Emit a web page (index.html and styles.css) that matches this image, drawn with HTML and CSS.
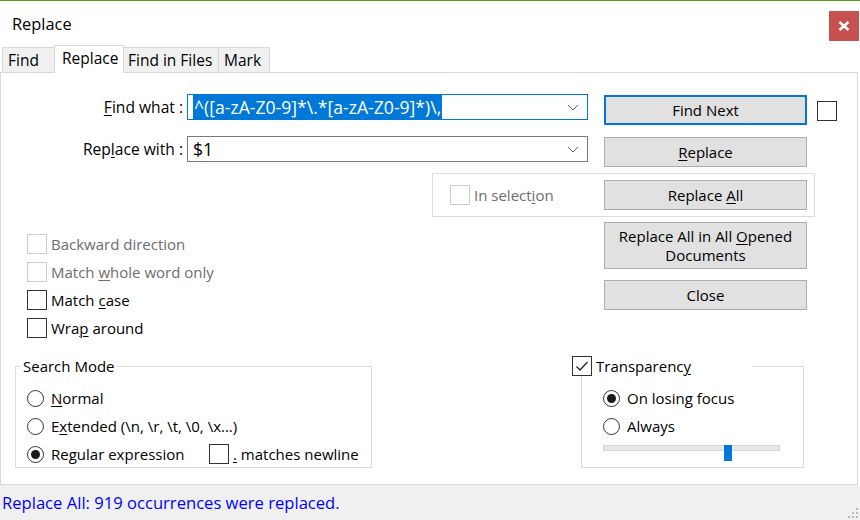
FILE: index.html
```html
<!DOCTYPE html>
<html lang="en">
<head>
  <meta charset="UTF-8">
  <title>Replace</title>
  <link rel="stylesheet" href="styles.css">
</head>
<body>
<div class="window">

  <header class="titlebar">
    <span class="title">Replace</span>
    <button class="close" title="Close">
      <svg width="12" height="10" viewBox="0 0 12 10"><path d="M1.5 1l9 8M10.5 1l-9 8" stroke="#fff" stroke-width="2.4" fill="none"/></svg>
    </button>
  </header>

  <nav class="tabs">
    <span class="tab tab-find">Find</span>
    <span class="tab tab-replace active">Replace</span>
    <span class="tab tab-files">Find in Files</span>
    <span class="tab tab-mark">Mark</span>
  </nav>

  <section class="panel">

    <div class="field-row">
      <label class="field-label"><u>F</u>ind what :</label>
      <div class="combo focused">
        <span class="combo-text"><span class="selected">^([a-zA-Z0-9]*\.*[a-zA-Z0-9]*)\,</span></span>
        <svg class="chevron" width="12" height="7" viewBox="0 0 12 7"><path d="M1 1l5 5 5-5" stroke="#606060" fill="none"/></svg>
      </div>
      <button class="btn default">Find Next</button>
      <span class="checkbox side-check"></span>
    </div>

    <div class="field-row">
      <label class="field-label">Rep<u>l</u>ace with :</label>
      <div class="combo">
        <span class="combo-text">$1</span>
        <svg class="chevron" width="12" height="7" viewBox="0 0 12 7"><path d="M1 1l5 5 5-5" stroke="#606060" fill="none"/></svg>
      </div>
      <button class="btn"><u>R</u>eplace</button>
    </div>

    <div class="selection-box">
      <span class="checkbox disabled"></span>
      <span class="disabled-text">In select<u>i</u>on</span>
      <button class="btn">Replace <u>A</u>ll</button>
    </div>

    <div class="middle">
      <div class="options">
        <div class="option"><span class="checkbox disabled"></span><span class="disabled-text">Backward direction</span></div>
        <div class="option"><span class="checkbox disabled"></span><span class="disabled-text">Match <u>w</u>hole word only</span></div>
        <div class="option"><span class="checkbox"></span><span>Match <u>c</u>ase</span></div>
        <div class="option"><span class="checkbox"></span><span>Wra<u>p</u> around</span></div>
      </div>
      <div class="actions">
        <button class="btn tall">Replace All in All <u>O</u>pened<br>Documents</button>
        <button class="btn">Close</button>
      </div>
    </div>

    <div class="groups">
      <fieldset class="group search-mode">
        <legend>Search Mode</legend>
        <div class="group-body">
          <div class="option"><span class="radio"></span><span><u>N</u>ormal</span></div>
          <div class="option"><span class="radio"></span><span>E<u>x</u>tended (\n, \r, \t, \0, \x...)</span></div>
          <div class="option">
            <span class="radio checked"></span><span class="regex-label">Re<u>g</u>ular expression</span>
            <span class="checkbox"></span><span><u>.</u> matches newline</span>
          </div>
        </div>
      </fieldset>

      <fieldset class="group transparency">
        <legend>
          <span class="checkbox">
            <svg width="18" height="18" viewBox="0 0 18 18"><path d="M3.5 9.5l3.5 3.5 7.5-8" stroke="#222" stroke-width="1.3" fill="none"/></svg>
          </span>
          <span>Transparenc<u>y</u></span>
        </legend>
        <div class="group-body">
          <div class="option"><span class="radio checked"></span><span>On losing focus</span></div>
          <div class="option"><span class="radio"></span><span>Always</span></div>
          <div class="slider">
            <div class="track"></div>
            <div class="thumb"></div>
          </div>
        </div>
      </fieldset>
    </div>

  </section>

  <footer class="status">
    <span>Replace All: 919 occurrences were replaced.</span>
    <svg class="grip" width="10" height="10" viewBox="0 0 10 10">
      <rect x="8" y="0" width="2" height="2" fill="#b8b8b8"/>
      <rect x="4" y="4" width="2" height="2" fill="#b8b8b8"/>
      <rect x="8" y="4" width="2" height="2" fill="#b8b8b8"/>
      <rect x="0" y="8" width="2" height="2" fill="#b8b8b8"/>
      <rect x="4" y="8" width="2" height="2" fill="#b8b8b8"/>
      <rect x="8" y="8" width="2" height="2" fill="#b8b8b8"/>
    </svg>
  </footer>

</div>
</body>
</html>
```

FILE: styles.css
```css
* {
  box-sizing: border-box;
}

body {
  margin: 0;
  width: 860px;
  height: 520px;
  overflow: hidden;
  background: #fff;
  font-family: "Open Sans", "Noto Sans", sans-serif;
  font-size: 15px;
  line-height: 20px;
  color: #000;
}

u {
  text-decoration-thickness: 1px;
  text-underline-offset: 2px;
}

.window {
  display: flex;
  flex-direction: column;
  height: 520px;
}

/* title bar */

.titlebar {
  height: 45px;
  border-top: 1px solid #5b9a1c;
  display: flex;
  justify-content: space-between;
  align-items: flex-start;
}

.title {
  font-size: 16.4px;
  margin: 13px 0 0 12px;
}

.close {
  width: 30px;
  height: 30px;
  margin: 10px 1px 0 0;
  padding: 0;
  border: 0;
  background: #c75050;
  display: flex;
  align-items: center;
  justify-content: center;
}

/* tabs */

.tabs {
  height: 27px;
  display: flex;
  align-items: flex-end;
  padding-left: 2px;
  position: relative;
  z-index: 1;
  font-size: 15.5px;
}

.tab {
  height: 25px;
  margin-left: -1px;
  border: 1px solid #d9d9d9;
  border-bottom: 0;
  background: #f0f0f0;
  line-height: 24px;
}

.tab-find { margin-left: 0; width: 53px; padding-left: 5px; }
.tab-replace { width: 70px; padding-left: 7px; }
.tab-files { width: 96px; padding-left: 4px; }
.tab-mark { width: 52px; padding-left: 5px; }

.tab.active {
  height: 28px;
  margin-bottom: -1px;
  background: #fff;
  line-height: 25px;
}

/* tab page */

.panel {
  width: 858px;
  height: 413px;
  border: 1px solid #d9d9d9;
  padding-top: 21px;
}

.field-row {
  display: flex;
  align-items: flex-start;
  height: 31px;
  margin-bottom: 11px;
}

.field-label {
  width: 182px;
  margin-right: 4px;
  text-align: right;
  line-height: 26px;
  font-size: 15.6px;
}

.combo {
  width: 401px;
  height: 26px;
  margin-right: 16px;
  border: 1px solid #7a7a7a;
  display: flex;
  align-items: center;
  padding-left: 5px;
  font-size: 17.6px;
}

.combo.focused {
  border-color: #0078d7;
}

.combo-text {
  flex: 1;
  white-space: nowrap;
}

.selected {
  background: #0078d7;
  color: #fff;
  padding: 0 1px;
}

.chevron {
  margin-right: 8px;
}

.btn {
  width: 203px;
  height: 30px;
  margin-top: 1px;
  padding: 0;
  border: 1px solid #adadad;
  background: #e1e1e1;
  font: inherit;
  color: #000;
}

.btn.default {
  border: 2px solid #0078d7;
}

.btn.tall {
  height: 47px;
  margin-top: 0;
  line-height: 19px;
}

.checkbox {
  width: 20px;
  height: 20px;
  flex: none;
  border: 1px solid #333;
  background: #fff;
  display: inline-flex;
  align-items: center;
  justify-content: center;
}

.checkbox.disabled {
  border-color: #cccccc;
}

.disabled-text {
  color: #6d6d6d;
}

.side-check {
  margin: 7px 0 0 10px;
}

/* in selection */

.selection-box {
  width: 383px;
  height: 44px;
  margin: -5px 0 0 431px;
  border: 1px solid #dcdcdc;
  display: flex;
  align-items: center;
  gap: 4px;
  padding: 0 7px 0 17px;
}

.selection-box .btn {
  margin: 0 0 0 auto;
}

/* options and side buttons */

.middle {
  display: flex;
  height: 125px;
}

.options {
  width: 603px;
  padding: 13px 0 0 26px;
}

.option {
  display: flex;
  align-items: center;
  gap: 4px;
  height: 28px;
}

.actions {
  display: flex;
  flex-direction: column;
  gap: 11px;
  padding-top: 5px;
}

.actions .btn {
  margin-top: 0;
}

/* group boxes */

.groups {
  display: flex;
  align-items: flex-start;
  margin-top: 14px;
}

.group {
  height: 112px;
  margin: 0;
  padding: 0;
  border: 1px solid #dcdcdc;
  min-width: 0;
}

.group legend {
  padding: 0 2px;
  line-height: 20px;
}

.group-body {
  padding-top: 8px;
}

.search-mode {
  width: 357px;
  margin-left: 14px;
}

.search-mode legend {
  margin-left: 5px;
}

.search-mode .group-body {
  padding-left: 11px;
}

.transparency {
  width: 223px;
  margin-left: 209px;
}

.transparency legend {
  width: 180px;
  margin-left: -10px;
  padding: 0;
  display: flex;
  align-items: center;
  gap: 4px;
}

.transparency .group-body {
  padding-left: 21px;
}

.radio {
  width: 17px;
  height: 17px;
  margin-right: 3px;
  flex: none;
  border: 1px solid #333;
  border-radius: 50%;
  background: #fff;
  display: inline-flex;
  align-items: center;
  justify-content: center;
}

.radio.checked::after {
  content: "";
  width: 9px;
  height: 9px;
  border-radius: 50%;
  background: #1a1a1a;
}

.regex-label {
  width: 154px;
}

/* slider */

.slider {
  position: relative;
  width: 177px;
  height: 16px;
  margin-top: 1px;
}

.track {
  height: 6px;
  margin-top: 5px;
  border: 1px solid #d6d6d6;
  background: #e7e7e7;
}

.thumb {
  position: absolute;
  left: 121px;
  top: 0;
  width: 8px;
  height: 16px;
  background: #0078d7;
}

/* status bar */

.status {
  flex: 1;
  display: flex;
  align-items: center;
  justify-content: space-between;
  padding-left: 2px;
  background: #f0f0f0;
  color: #0000ff;
  font-size: 16.6px;
}

.grip {
  align-self: flex-end;
  margin: 0 2px 2px 0;
}
```
